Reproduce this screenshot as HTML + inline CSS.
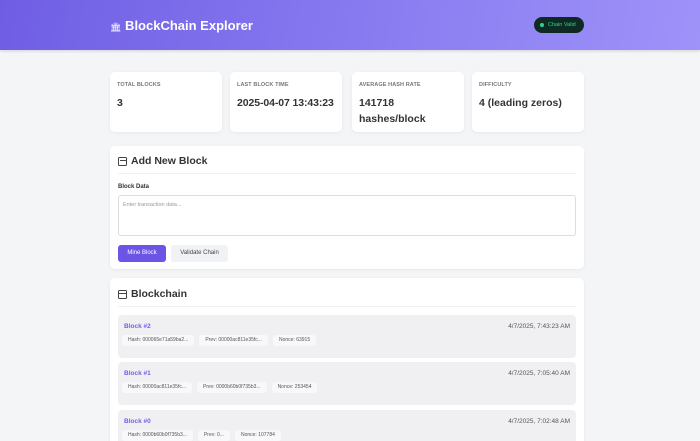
<!DOCTYPE html>
<html><head><style>
*{box-sizing:border-box;margin:0;padding:0}
html,body{width:700px;height:441px;overflow:hidden}
body{background:#f4f5f7;font-family:"Liberation Sans",sans-serif;color:#2d3142;position:relative}
.hdr{position:absolute;left:0;top:0;width:700px;height:50px;background:linear-gradient(100deg,#6f5ee4,#8b7ff2 60%,#9f92f9);box-shadow:0 1px 3px rgba(0,0,0,.15)}
.title{position:absolute;left:110px;top:18px;color:#fff;font-weight:bold;font-size:13px}
.badge{position:absolute;left:534px;top:17px;width:50px;height:16px;border-radius:8px;background:#0f2a22;color:#2bd58d;font-size:5.5px;line-height:16px;padding-left:14px}
.badge:before{content:"";position:absolute;left:6px;top:6px;width:4px;height:4px;border-radius:50%;background:#2bd58d}
.card{position:absolute;background:#fff;border-radius:5px;box-shadow:0 1px 3px rgba(0,0,0,.06)}
.stat{top:72px;width:112px;height:60px;padding:10px 7px}
.stat .l{font-size:5.5px;color:#777;font-weight:bold;letter-spacing:.1px}
.stat .v{font-size:10.5px;font-weight:bold;margin-top:7px;line-height:16px;color:#333;white-space:nowrap}
.h2{position:absolute;font-size:10.5px;font-weight:bold;color:#333}
.ico{position:absolute;width:9px;height:9px;border:1.2px solid #444;border-radius:1.5px}
.line{position:absolute;left:8px;right:8px;height:1px;background:#f0f0f2}
.blk{position:absolute;left:8px;width:458px;height:43px;background:#f0f0f3;border-radius:4px}
.blk .n{position:absolute;left:6px;top:8px;color:#7a5de8;font-weight:bold;font-size:6.5px}
.blk .t{position:absolute;right:6px;top:8px;color:#555;font-size:6.5px}
.tags{position:absolute;left:4px;top:20px;display:flex;gap:5px}
.tags span{background:#f8f8fa;font-size:5px;color:#555;padding:2px 6px;border-radius:3px;height:11px;line-height:7px}
</style></head><body>
<div class="hdr">
<div class="title"><span style="font-size:9px;font-weight:normal">&#x1F3DB;</span> BlockChain Explorer</div>
<div class="badge">Chain Valid</div>
</div>
<div class="card stat" style="left:110px"><div class="l">TOTAL BLOCKS</div><div class="v">3</div></div>
<div class="card stat" style="left:230px"><div class="l">LAST BLOCK TIME</div><div class="v" style="letter-spacing:-0.1px">2025-04-07 13:43:23</div></div>
<div class="card stat" style="left:352px"><div class="l">AVERAGE HASH RATE</div><div class="v">141718<br>hashes/block</div></div>
<div class="card stat" style="left:472px"><div class="l">DIFFICULTY</div><div class="v">4 (leading zeros)</div></div>

<div class="card" style="left:110px;top:146px;width:474px;height:123px">
<div class="ico" style="left:8px;top:11px"></div><div style="position:absolute;left:10px;top:14px;width:6px;height:1px;background:#444"></div>
<div class="h2" style="left:21px;top:9px">Add New Block</div>
<div class="line" style="top:27px"></div>
<div style="position:absolute;left:8px;top:38px;font-size:6px;font-weight:bold;color:#333">Block Data</div>
<div style="position:absolute;left:8px;top:49px;width:458px;height:41px;border:1px solid #ddd;border-radius:3px;font-size:5.5px;color:#999;padding:6px 4px">Enter transaction data...</div>
<div style="position:absolute;left:8px;top:99px;width:48px;height:17px;background:#6c55e6;border-radius:3px;color:#fff;font-size:6px;text-align:center;line-height:17px">Mine Block</div>
<div style="position:absolute;left:61px;top:99px;width:57px;height:17px;background:#f1f2f5;border-radius:3px;color:#444;font-size:6px;text-align:center;line-height:17px">Validate Chain</div>
</div>

<div class="card" style="left:110px;top:278px;width:474px;height:180px">
<div class="ico" style="left:8px;top:12px"></div><div style="position:absolute;left:9px;top:15px;width:7px;height:1px;background:#444"></div>
<div class="h2" style="left:21px;top:10px">Blockchain</div>
<div class="line" style="top:28px"></div>
<div class="blk" style="top:37px"><div class="n">Block #2</div><div class="t">4/7/2025, 7:43:23 AM</div><div class="tags"><span>Hash: 000065e71a59ba2...</span><span>Prev: 00000ac811e35fc...</span><span>Nonce: 63915</span></div></div>
<div class="blk" style="top:84px"><div class="n">Block #1</div><div class="t">4/7/2025, 7:05:40 AM</div><div class="tags"><span>Hash: 00000ac811e35fc...</span><span>Prev: 0000b60b0f735b3...</span><span>Nonce: 253454</span></div></div>
<div class="blk" style="top:132px"><div class="n">Block #0</div><div class="t">4/7/2025, 7:02:48 AM</div><div class="tags"><span>Hash: 0000b60b0f735b3...</span><span>Prev: 0...</span><span>Nonce: 107784</span></div></div>
</div>
</body></html>
